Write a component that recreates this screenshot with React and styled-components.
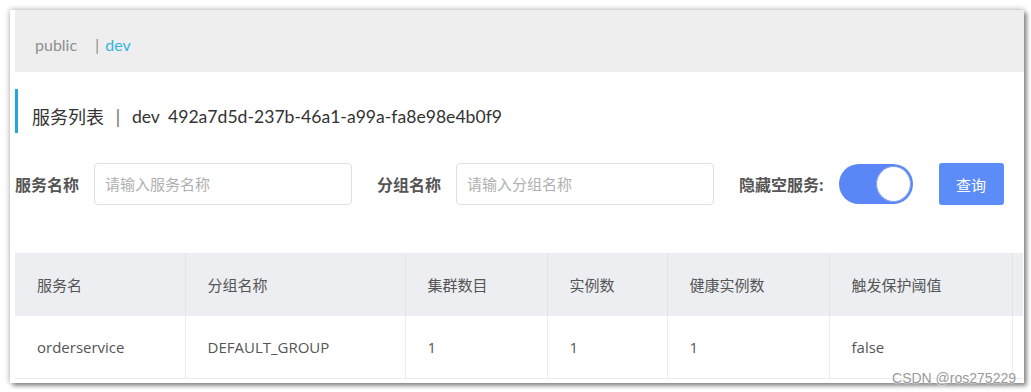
import React from "react";
import styled, { createGlobalStyle } from "styled-components";

const GlobalStyle = createGlobalStyle`
  html, body {
    margin: 0;
    padding: 0;
    background: #ffffff;
  }
  body {
    font-family: "Open Sans", "Noto Sans CJK SC", sans-serif;
  }
`;

const Page = styled.div`
  position: relative;
  width: 1031px;
  height: 392px;
  padding: 10px 7px 9px 10px;
  box-sizing: border-box;
  overflow: hidden;
`;

const Card = styled.div`
  height: 373px;
  background: #ffffff;
  padding-left: 5px;
  box-shadow: 0 0 6px rgba(0, 0, 0, 0.35), 3px 3px 4px rgba(0, 0, 0, 0.35);
  display: flex;
  flex-direction: column;
  overflow: hidden;
`;

const NsBar = styled.div`
  height: 62px;
  background: #eeeeee;
  display: flex;
  align-items: center;
  padding: 6px 0 0 20px;
  box-sizing: border-box;
  font-size: 15px;
  color: #999999;
`;

const NsItem = styled.span`
  font-family: "Lato", "Noto Sans CJK SC", sans-serif;
  font-size: 16px;
  color: ${(p) => (p.active ? "#35b5dc" : "#8e8e8e")};
`;

const NsSep = styled.span`
  color: #8a7f86;
  margin: 0 4px 0 16px;
`;

const Title = styled.div`
  margin-top: 17px;
  height: 44px;
  border-left: 3px solid #23a7d9;
  display: flex;
  align-items: center;
  padding-left: 14px;
  padding-top: 10px;
  box-sizing: border-box;
  font-size: 18px;
  color: #333333;
  white-space: nowrap;
`;

const TitleSep = styled.span`
  margin: 0 9px;
  color: #666;
`;

const TitleId = styled.span`
  font-family: "Lato", "Noto Sans CJK SC", sans-serif;
  font-size: 17.6px;
  word-spacing: 4px;
`;

const Filters = styled.div`
  margin-top: 30px;
  height: 42px;
  display: flex;
  align-items: center;
`;

const Label = styled.span`
  font-size: 16px;
  font-weight: bold;
  color: #555555;
  margin-right: 15px;
  white-space: nowrap;
`;

const Input = styled.input`
  width: 258px;
  height: 42px;
  box-sizing: border-box;
  border: 1px solid #dcdfe6;
  border-radius: 4px;
  padding: 0 10px;
  font-size: 15px;
  font-family: inherit;
  color: #333;
  margin-right: 25px;
  outline: none;
  &::placeholder {
    color: #b0b0b0;
  }
`;

const Toggle = styled.div`
  width: 74px;
  height: 40px;
  border-radius: 20px;
  background: #5a87f5;
  display: flex;
  align-items: center;
  justify-content: flex-end;
  padding: 2px;
  box-sizing: border-box;
  margin-right: 26px;
`;

const Knob = styled.div`
  width: 35px;
  height: 36px;
  border-radius: 50%;
  background: #ffffff;
  border: 1px solid #7fa2f7;
  box-sizing: border-box;
`;

const Button = styled.button`
  width: 65px;
  height: 42px;
  border: none;
  border-radius: 3px;
  background: #5b8cf7;
  color: #ffffff;
  font-size: 15px;
  font-family: inherit;
`;

const Table = styled.table`
  margin-top: 48px;
  border-collapse: collapse;
  table-layout: fixed;
  width: 1008px;
  font-size: 15px;
  color: #555555;
`;

const Th = styled.th`
  height: 63px;
  background: #eceef2;
  font-weight: normal;
  text-align: left;
  padding: 0 0 0 22px;
  border-right: 1px solid #e2e4e8;
  white-space: nowrap;
  &:last-child {
    border-right: none;
  }
`;

const Td = styled.td`
  height: 62px;
  text-align: left;
  padding: 0 0 0 22px;
  border-right: 1px solid #ececec;
  border-bottom: 1px solid #ececec;
  white-space: nowrap;
  &:last-child {
    border-right: none;
  }
`;

const Watermark = styled.div`
  position: absolute;
  right: 15px;
  bottom: 6px;
  font-family: "Liberation Sans", Arial, sans-serif;
  font-size: 14px;
  color: #9a9a9a;
  text-shadow: 0 0 2px #fff, 0 0 2px #fff;
`;

const columns = [
  { title: "服务名", width: 170 },
  { title: "分组名称", width: 220 },
  { title: "集群数目", width: 142 },
  { title: "实例数", width: 120 },
  { title: "健康实例数", width: 162 },
  { title: "触发保护阈值", width: 183 },
  { title: "", width: 11 },
];

const rows = [["orderservice", "DEFAULT_GROUP", "1", "1", "1", "false", ""]];

const App = () => {
  return (
    <Page>
      <GlobalStyle />
      <Card>
        <NsBar>
          <NsItem>public</NsItem>
          <NsSep>|</NsSep>
          <NsItem active>dev</NsItem>
        </NsBar>
        <Title>
          服务列表<TitleSep>|</TitleSep>
          <TitleId>dev 492a7d5d-237b-46a1-a99a-fa8e98e4b0f9</TitleId>
        </Title>
        <Filters>
          <Label>服务名称</Label>
          <Input placeholder="请输入服务名称" />
          <Label>分组名称</Label>
          <Input placeholder="请输入分组名称" />
          <Label>隐藏空服务:</Label>
          <Toggle>
            <Knob />
          </Toggle>
          <Button>查询</Button>
        </Filters>
        <Table>
          <colgroup>
            {columns.map((c, i) => (
              <col key={i} style={{ width: c.width }} />
            ))}
          </colgroup>
          <thead>
            <tr>
              {columns.map((c, i) => (
                <Th key={i}>{c.title}</Th>
              ))}
            </tr>
          </thead>
          <tbody>
            {rows.map((r, i) => (
              <tr key={i}>
                {r.map((v, j) => (
                  <Td key={j}>{v}</Td>
                ))}
              </tr>
            ))}
          </tbody>
        </Table>
      </Card>
      <Watermark>CSDN @ros275229</Watermark>
    </Page>
  );
};

export default App;
